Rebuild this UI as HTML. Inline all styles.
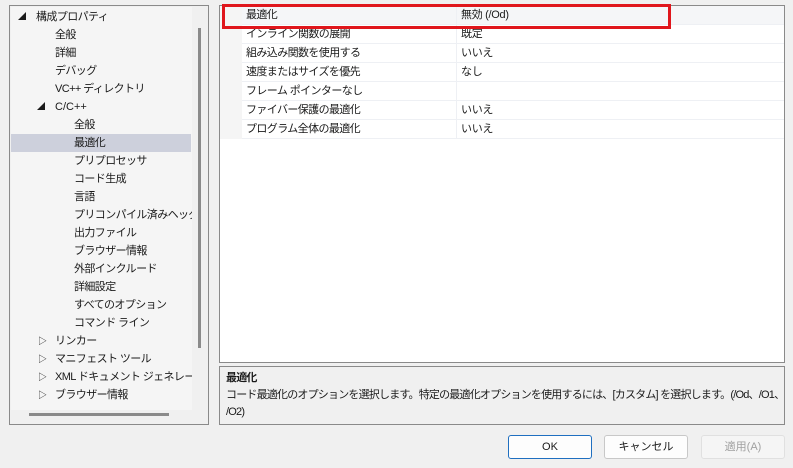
<!DOCTYPE html>
<html><head><meta charset="utf-8"><style>
*{margin:0;padding:0;box-sizing:border-box}
body{width:793px;height:468px;background:#f0f0f0;font-family:"Liberation Sans","Noto Sans CJK JP",sans-serif;font-size:11px;letter-spacing:-0.6px;color:#1a1a1a;position:relative;overflow:hidden}
.abs{position:absolute}
#left{left:9px;top:5px;width:200px;height:420px;border:1px solid #8a8a8a;background:#f0f0f0}
#list{left:1px;top:1px;width:181px;height:403px;background:#f5f5f5;overflow:hidden}
.t{position:absolute;height:18px;line-height:18px;white-space:nowrap}
.sel{background:#cdd0dc}
#vs{left:188px;top:22px;width:3px;height:320px;background:#8a8a8a}
#right{left:219px;top:5px;width:566px;height:358px;border:1px solid #8a8a8a;background:#fff}
.row{position:absolute;left:22px;width:542px;height:19px;border-bottom:1px solid #eef0f4;line-height:18px}
.row span{position:absolute;left:4px}
.row b{font-weight:normal;position:absolute;left:219px;letter-spacing:-0.3px}
.row i{position:absolute;left:214px;top:0;width:1px;height:19px;background:#eef0f4}
#desc{left:219px;top:366px;width:566px;height:59px;border:1px solid #8a8a8a;background:#f0f0f0;padding:3px 6px;line-height:17px;white-space:nowrap;overflow:hidden;letter-spacing:-0.8px}
.btn{top:435px;width:84px;height:24px;border:1px solid #c8c8c8;border-radius:3px;background:#fdfdfd;text-align:center;line-height:22px;letter-spacing:0}
</style></head><body>
<div id="left" class="abs">
<div id="list" class="abs">
<div class="t" style="top:1px;left:7px;font-size:8px">◢</div><div class="t" style="top:1px;left:25px">構成プロパティ</div>
<div class="t" style="top:19px;left:44px">全般</div>
<div class="t" style="top:37px;left:44px">詳細</div>
<div class="t" style="top:55px;left:44px">デバッグ</div>
<div class="t" style="top:73px;left:44px">VC++ ディレクトリ</div>
<div class="t" style="top:91px;left:26px;font-size:8px">◢</div><div class="t" style="top:91px;left:44px;letter-spacing:0">C/C++</div>
<div class="t" style="top:109px;left:63px">全般</div>
<div class="t sel" style="top:127px;left:0;width:180px;padding-left:63px">最適化</div>
<div class="t" style="top:145px;left:63px">プリプロセッサ</div>
<div class="t" style="top:163px;left:63px">コード生成</div>
<div class="t" style="top:181px;left:63px">言語</div>
<div class="t" style="top:199px;left:63px">プリコンパイル済みヘッダー</div>
<div class="t" style="top:217px;left:63px">出力ファイル</div>
<div class="t" style="top:235px;left:63px">ブラウザー情報</div>
<div class="t" style="top:253px;left:63px">外部インクルード</div>
<div class="t" style="top:271px;left:63px">詳細設定</div>
<div class="t" style="top:289px;left:63px">すべてのオプション</div>
<div class="t" style="top:307px;left:63px">コマンド ライン</div>
<div class="t" style="top:325px;left:27px;font-size:9px">▷</div><div class="t" style="top:325px;left:44px">リンカー</div>
<div class="t" style="top:343px;left:27px;font-size:9px">▷</div><div class="t" style="top:343px;left:44px">マニフェスト ツール</div>
<div class="t" style="top:361px;left:27px;font-size:9px">▷</div><div class="t" style="top:361px;left:44px">XML ドキュメント ジェネレーター</div>
<div class="t" style="top:379px;left:27px;font-size:9px">▷</div><div class="t" style="top:379px;left:44px">ブラウザー情報</div>
</div>
<div id="vs" class="abs"></div>
<div class="abs" style="left:19px;top:407px;width:140px;height:3px;background:#8a8a8a"></div>
</div>
<div id="right" class="abs">
<div class="abs" style="left:0;top:0;width:22px;height:133px;background:#f5f5f5"></div>
<div class="row" style="top:0;background:#f5f6f8"><span>最適化</span><i></i><b>無効 (/Od)</b></div>
<div class="row" style="top:19px"><span>インライン関数の展開</span><i></i><b>既定</b></div>
<div class="row" style="top:38px"><span>組み込み関数を使用する</span><i></i><b>いいえ</b></div>
<div class="row" style="top:57px"><span>速度またはサイズを優先</span><i></i><b>なし</b></div>
<div class="row" style="top:76px"><span>フレーム ポインターなし</span><i></i><b></b></div>
<div class="row" style="top:95px"><span>ファイバー保護の最適化</span><i></i><b>いいえ</b></div>
<div class="row" style="top:114px"><span>プログラム全体の最適化</span><i></i><b>いいえ</b></div>
</div>
<div class="abs" style="left:222px;top:4px;width:449px;height:25px;border:3px solid #e0161c"></div>
<div id="desc" class="abs"><div style="font-weight:bold">最適化</div><div>コード最適化のオプションを選択します。特定の最適化オプションを使用するには、[カスタム] を選択します。(/Od、/O1、</div><div>/O2)</div></div>
<div class="abs btn" style="left:508px;border:1px solid #1f6fc0">OK</div>
<div class="abs btn" style="left:604px">キャンセル</div>
<div class="abs btn" style="left:701px;color:#a0a0a0;background:#f5f5f5;border-color:#e0e0e0">適用(A)</div>
</body></html>
